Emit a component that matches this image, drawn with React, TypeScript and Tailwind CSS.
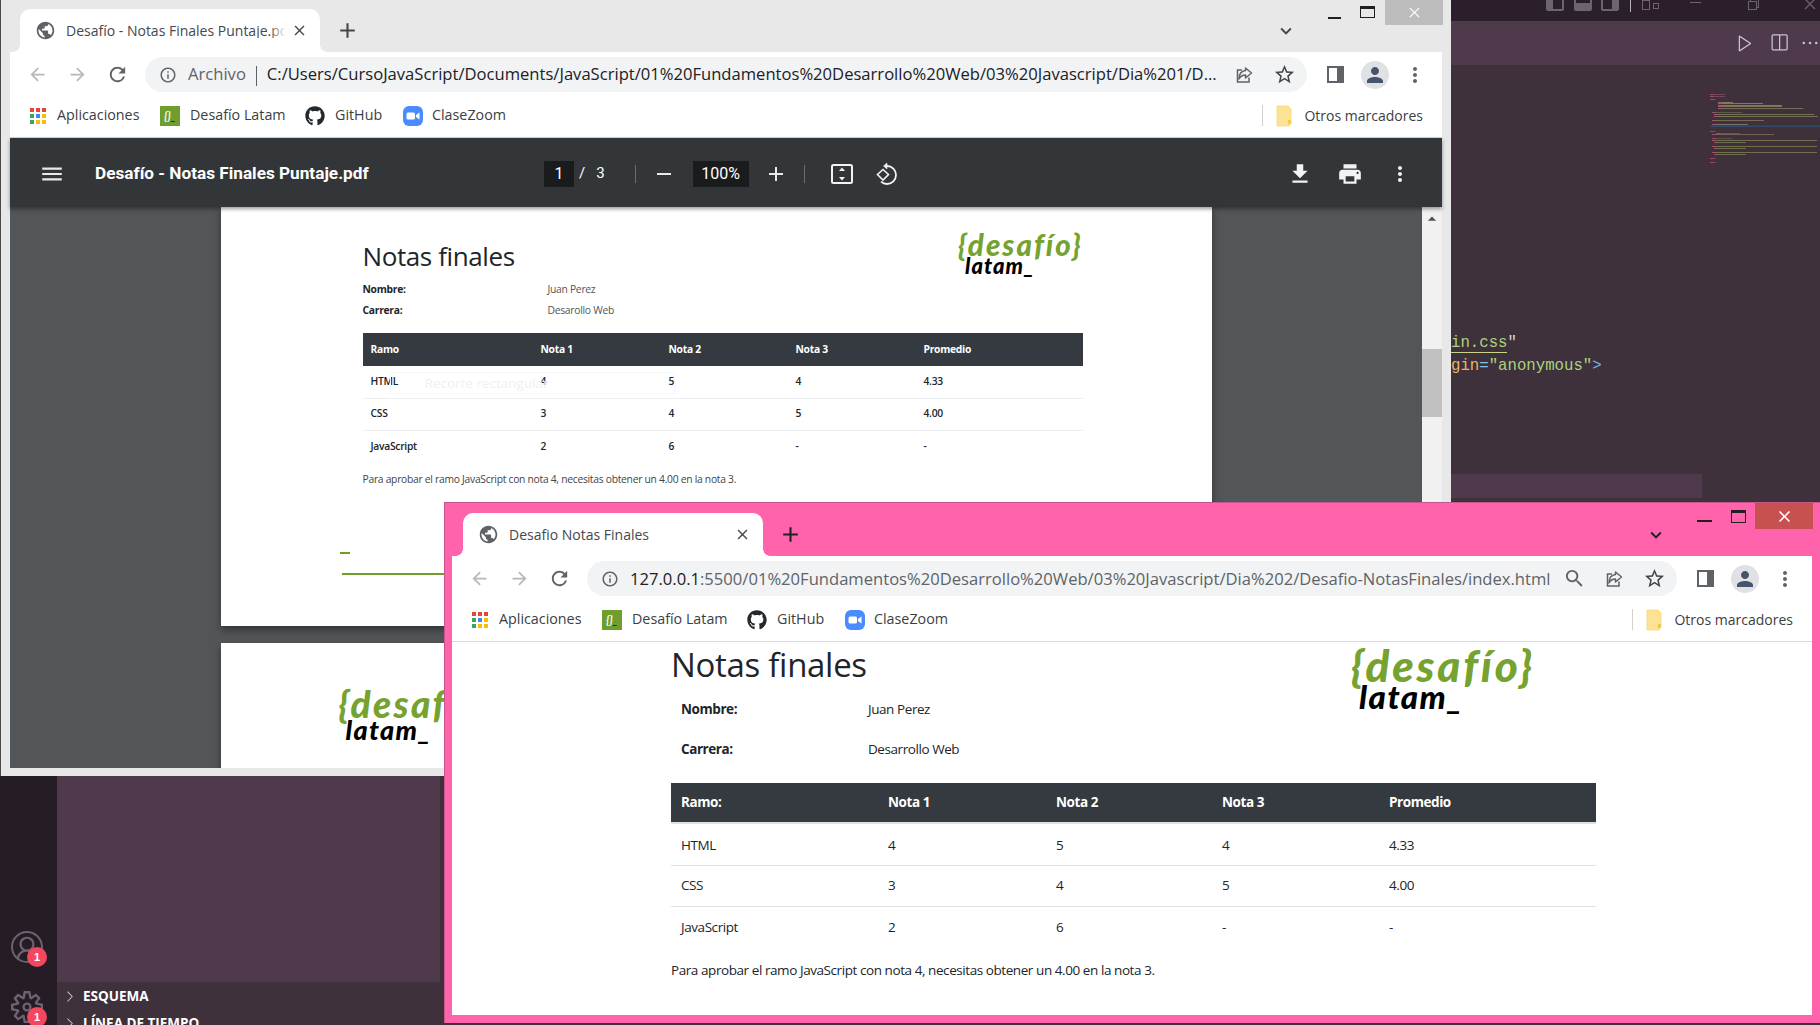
import React from "react";
import { MdPublic, MdArrowBack, MdArrowForward, MdRefresh, MdInfoOutline, MdStarBorder, MdMoreVert, MdPerson, MdClose, MdAdd, MdRemove, MdMenu, MdFileDownload, MdPrint, MdKeyboardArrowDown, MdSearch, MdArrowDropUp } from "react-icons/md";
import { FaGithub } from "react-icons/fa";
import { VscAccount, VscSettingsGear, VscChevronRight, VscPlay, VscSplitHorizontal, VscEllipsis, VscChromeClose, VscChromeRestore, VscChromeMinimize } from "react-icons/vsc";

const ui = "font-['Open_Sans','Noto_Sans',sans-serif]";

function ShareIcon() {
  return (
    <svg width="20" height="20" viewBox="0 0 20 20" fill="none" stroke="#5f6368" strokeWidth="1.5">
      <path d="M8 5H3.500v12h11.500v-4.500" />
      <path d="M11.500 3l6 5-6 5v-3c-3 0-5 1-6.500 4 0-5 2.500-8 6.500-8.500z" strokeLinejoin="round" />
    </svg>
  );
}

function AppsIcon() {
  const c = ["#ea4335", "#ea4335", "#ea4335", "#34a853", "#4285f4", "#fbbc04", "#34a853", "#fbbc04", "#fbbc04"];
  return (
    <div className="grid grid-cols-3 gap-[2px] w-[16px] h-[16px] mx-[2px]">
      {c.map((col, i) => (
        <span key={i} className="w-[4px] h-[4px]" style={{ backgroundColor: col }} />
      ))}
    </div>
  );
}

function DesafioFavicon() {
  return (
    <div className="w-[20px] h-[20px] bg-[#6f9e2c] flex items-center justify-center">
      <span className="font-['Lato',sans-serif] italic font-bold text-[11px] leading-none text-white">
        {"{}"}
        <span className="text-[#2d3b14]">_</span>
      </span>
    </div>
  );
}

function ZoomIcon() {
  return (
    <svg width="20" height="20" viewBox="0 0 20 20">
      <rect width="20" height="20" rx="6" fill="#4a8cff" />
      <rect x="3.500" y="6.500" width="8.500" height="7" rx="1.500" fill="#fff" />
      <path d="M13 9l3.500-2.500v7L13 11z" fill="#fff" />
    </svg>
  );
}

function FolderIcon() {
  return (
    <svg width="16" height="22" viewBox="0 0 16 22">
      <path d="M1 1h11l3 3v14l-2 3H1z" fill="#fde293" stroke="#f5d878" strokeWidth="0.8" />
      <rect x="12" y="15" width="3" height="4" fill="#f2c94c" />
    </svg>
  );
}

function Bookmarks() {
  const text = "text-[14.3px] leading-none text-[#3c4043] whitespace-nowrap";
  return (
    <div className={`h-[43px] bg-white border-b border-[#d9dadb] flex items-center pl-[18px] pr-[19px] pb-[1px] ${ui}`}>
      <AppsIcon />
      <span className={`${text} w-[83px] ml-[9px]`}>Aplicaciones</span>
      <div className="ml-[20px]"><DesafioFavicon /></div>
      <span className={`${text} w-[93px] ml-[10px]`}>Desafío Latam</span>
      <FaGithub className="ml-[22px] text-[#24292e]" size={20} />
      <span className={`${text} w-[47px] ml-[10px]`}>GitHub</span>
      <div className="ml-[21px]"><ZoomIcon /></div>
      <span className={`${text} w-[74px] ml-[9px]`}>ClaseZoom</span>
      <div className="flex-1" />
      <div className="w-px h-[21px] bg-[#d0d1d2]" />
      <div className="ml-[13px]"><FolderIcon /></div>
      <span className="text-[14px] leading-none text-[#3c4043] whitespace-nowrap ml-[12px]">Otros marcadores</span>
    </div>
  );
}

function Toolbar({ extraZoom, children }: { extraZoom?: boolean; children: React.ReactNode }) {
  const btn = "w-[40px] h-[35px] flex items-center justify-center shrink-0";
  return (
    <div className="h-[43px] bg-white flex items-start pt-[5px] pl-[7px] pr-[7px]">
      <div className={btn}><MdArrowBack size={21} color="#b6b8ba" /></div>
      <div className={btn}><MdArrowForward size={21} color="#b6b8ba" /></div>
      <div className={btn}><MdRefresh size={23} color="#5f6368" /></div>
      <div className={`flex-1 ml-[8px] mr-[8px] h-[35px] bg-[#f1f3f4] rounded-full flex items-center pl-[14px] pr-[3px] min-w-0 ${ui}`}>
        <MdInfoOutline size={18} color="#5f6368" className="shrink-0" />
        <div className="ml-[11px] pt-[2px] flex-1 min-w-0 overflow-hidden whitespace-nowrap text-[16.6px] leading-none">{children}</div>
        {extraZoom && <div className="w-[40px] flex justify-center"><MdSearch size={23} color="#5f6368" /></div>}
        <div className="w-[40px] flex justify-center"><ShareIcon /></div>
        <div className="w-[40px] flex justify-center"><MdStarBorder size={23} color="#44474a" /></div>
      </div>
      <div className={btn}>
        <div className="w-[17px] h-[17px] border-[2.5px] border-[#5f6368] border-r-[7px]" />
      </div>
      <div className={btn}>
        <div className="w-[28px] h-[28px] rounded-full bg-[#dfe1e5] flex items-center justify-center">
          <MdPerson size={24} color="#44546a" />
        </div>
      </div>
      <div className={btn}><MdMoreVert size={24} color="#5f6368" /></div>
    </div>
  );
}

function TabStrip({ title, fade, plusColor, chevColor, inset }: { title: string; fade?: boolean; plusColor: string; chevColor: string; inset: string }) {
  return (
    <div className={`h-[43px] flex items-center relative ${inset}`}>
      <div className={`w-[300px] h-[43px] bg-white rounded-t-[10px] flex items-center pl-[15px] pr-[12px] relative ${ui}`}>
        <span className="absolute -left-[7px] bottom-0 w-[7px] h-[7px] bg-[radial-gradient(circle_at_0_0,transparent_6.500px,white_7px)]" />
        <span className="absolute -right-[7px] bottom-0 w-[7px] h-[7px] bg-[radial-gradient(circle_at_100%_0,transparent_6.500px,white_7px)]" />
        <MdPublic size={21} color="#5f6368" className="shrink-0" />
        <div className="relative ml-[10px] w-[220px] overflow-hidden whitespace-nowrap text-[14px] leading-none text-[#45484c]">
          {title}
          {fade && <span className="absolute right-0 top-0 bottom-0 w-[16px] bg-gradient-to-r from-transparent to-white" />}
        </div>
        <div className="flex-1" />
        <MdClose size={17} color="#45484c" className="shrink-0" />
      </div>
      <MdAdd size={25} style={{ color: plusColor }} className="ml-[15px]" />
      <div className="flex-1" />
      <MdKeyboardArrowDown size={22} style={{ color: chevColor }} className="mr-[145px]" />
    </div>
  );
}

type LogoSize = "sm" | "md" | "lg";

function Logo({ size }: { size: LogoSize }) {
  const top = size === "lg" ? "text-[44px] tracking-[2.8px] h-[37px]" : size === "md" ? "text-[37px] tracking-[2.3px] h-[31px]" : "text-[29.5px] tracking-[2px] h-[25px]";
  const bottom = size === "lg" ? "text-[33px] ml-[8px] tracking-[1.5px]" : size === "md" ? "text-[27px] ml-[7px] tracking-[1.3px]" : "text-[22px] ml-[7px] tracking-[1px]";
  return (
    <div className="font-['Lato',sans-serif] italic leading-none">
      <div className={`font-black text-[#76a22f] whitespace-nowrap ${top}`}>{"{desafío}"}</div>
      <div className={`font-black text-black whitespace-nowrap ${bottom}`}>latam_</div>
    </div>
  );
}

function ReportTable({ variant }: { variant: "pdf" | "web" }) {
  const pdf = variant === "pdf";
  const rows = [
    ["HTML", "4", "5", "4", "4.33"],
    ["CSS", "3", "4", "5", "4.00"],
    ["JavaScript", "2", "6", "-", "-"],
  ];
  const widths = pdf ? ["w-[170px]", "w-[128px]", "w-[127px]", "w-[128px]", ""] : ["w-[207px]", "w-[168px]", "w-[166px]", "w-[167px]", ""];
  const head = [pdf ? "Ramo" : "Ramo:", "Nota 1", "Nota 2", "Nota 3", "Promedio"];
  const th = pdf
    ? "h-[33px] text-[10.3px] tracking-[-0.27px] font-bold text-white text-left px-[8px] py-0"
    : "h-[40px] text-[13.5px] tracking-[-0.43px] font-bold text-white text-left px-[10px] py-0";
  const td = pdf
    ? "h-[32px] text-[10.3px] tracking-[-0.27px] font-semibold text-[#212529] px-[8px] py-0 border-t border-[#eceeef]"
    : "h-[41px] text-[13.5px] tracking-[-0.43px] text-[#212529] px-[10px] py-0 border-t border-[#dee2e6]";
  return (
    <table className={`table-fixed w-full border-collapse ${ui}`}>
      <colgroup>
        {widths.map((w, i) => <col key={i} className={w} />)}
      </colgroup>
      <thead>
        <tr className={pdf ? "bg-[#343a40]" : "bg-[#343a40] border-b-2 border-[#dee2e6]"}>
          {head.map((h) => <th key={h} className={th}>{h}</th>)}
        </tr>
      </thead>
      <tbody>
        {rows.map((r, i) => (
          <tr key={r[0]}>
            {r.map((c, j) => (
              <td key={j} className={`${td} ${i === 0 ? "border-t-0" : ""} ${i === 0 && !pdf ? "pt-[2px] h-[42px]" : ""} ${pdf && j === 0 ? "font-bold" : ""}`}>{c}</td>
            ))}
          </tr>
        ))}
      </tbody>
    </table>
  );
}

function PdfWindow() {
  const iconBtn = "flex items-center justify-center shrink-0";
  return (
    <section className="absolute left-0 top-0 w-[1451px] h-[776px] bg-[#e8e8e8] border-l border-[#4a4a4a] flex flex-col overflow-hidden">
      <div className="h-[9px]" />
      <TabStrip title="Desafío - Notas Finales Puntaje.pdf" fade plusColor="#44474a" chevColor="#44474a" inset="pl-[19px] pr-[9px]" />
      <div className="flex-1 min-h-0 pl-[9px] pr-[9px] pb-[8px] flex flex-col">
        <Toolbar>
          <span className="text-[#5f6368]">Archivo</span>
          <span className="inline-block w-px h-[20px] bg-[#5f6368] mx-[10px] align-middle" />
          <span className="text-[#202124]">C:/Users/CursoJavaScript/Documents/JavaScript/01%20Fundamentos%20Desarrollo%20Web/03%20Javascript/Dia%201/D...</span>
        </Toolbar>
        <Bookmarks />
        <div className="h-[69px] pt-[2px] bg-[#323639] flex items-center text-white font-['Roboto',sans-serif] shadow-[0_2px_4px_rgba(0,0,0,0.4)] relative z-10">
          <MdMenu size={26} className="ml-[29px]" color="#e8eaed" />
          <span className="ml-[30px] text-[17.2px] font-bold w-[275px] whitespace-nowrap">Desafío - Notas Finales Puntaje.pdf</span>
          <div className="ml-[174px] w-[30px] h-[26px] bg-[#191b1c] flex items-center justify-center text-[16px]">1</div>
          <span className="ml-[5px] text-[15px]">/</span>
          <span className="ml-[11px] text-[15px]">3</span>
          <div className="ml-[30px] w-px h-[18px] bg-[#6b6e70]" />
          <div className={`${iconBtn} ml-[16px] w-[24px]`}><MdRemove size={24} color="#e8eaed" /></div>
          <div className="ml-[17px] w-[56px] h-[26px] bg-[#191b1c] flex items-center justify-center text-[16px]">100%</div>
          <div className={`${iconBtn} ml-[15px] w-[24px]`}><MdAdd size={24} color="#e8eaed" /></div>
          <div className="ml-[16px] w-px h-[18px] bg-[#6b6e70]" />
          <svg className="ml-[26px]" width="22" height="20" viewBox="0 0 22 20" fill="none" stroke="#f1f3f4" strokeWidth="2">
            <rect x="1" y="1" width="20" height="18" rx="1.500" />
            <path d="M11 3.500l-3 3.500h6zM11 16.500l-3-3.500h6z" fill="#f1f3f4" strokeWidth="0" />
          </svg>
          <svg className="ml-[22px]" width="24" height="24" viewBox="0 0 24 24" fill="none" stroke="#f1f3f4" strokeWidth="1.800">
            <path d="M12 4a9 9 0 0 1 0 18 9 9 0 0 1-6-2.300" />
            <path d="M12 1v6l-3.500-3z" fill="#f1f3f4" strokeWidth="0.600" />
            <path d="M8 7.500l5.500 5-5.500 5.500-5.500-5.500z" strokeWidth="1.600" />
          </svg>
          <div className="flex-1" />
          <MdFileDownload size={26} color="#f1f3f4" />
          <MdPrint size={26} color="#f1f3f4" className="ml-[24px]" />
          <MdMoreVert size={24} color="#f1f3f4" className="ml-[25px] mr-[30px]" />
        </div>
        <div className="flex-1 min-h-0 flex">
          <div className="flex-1 bg-[#525659] overflow-hidden flex flex-col items-center">
            <article className="w-[991px] h-[419px] shrink-0 bg-white shadow-[0_4px_8px_rgba(0,0,0,0.4)] pt-[26px] pl-[142px] pr-[129px]">
              <div className="flex justify-between items-start h-[42px]">
                <h1 className={`text-[26px] leading-[46px] text-[#212529] tracking-[-0.4px] ${ui}`}>Notas finales</h1>
                <div className="-mt-[3px]"><Logo size="sm" /></div>
              </div>
              <dl className={`mt-[4px] ${ui} text-[10.3px] tracking-[-0.27px] text-[#212529]`}>
                <div className="flex h-[21px] items-center"><dt className="w-[185px] font-bold">Nombre:</dt><dd className="text-[#555]">Juan Perez</dd></div>
                <div className="flex h-[21px] items-center"><dt className="w-[185px] font-bold">Carrera:</dt><dd className="text-[#555]">Desarollo Web</dd></div>
              </dl>
              <div className="mt-[12px] relative">
                <ReportTable variant="pdf" />
                <div className={`absolute left-[27px] top-[39px] w-[285px] h-[22px] border border-[#f6f8fa] flex items-center pl-[34px] text-[13.5px] text-[#eef1f3] whitespace-nowrap ${ui}`}>Recorte rectangular</div>
              </div>
              <p className={`mt-[10px] text-[10.3px] tracking-[-0.27px] text-[#444] ${ui}`}>Para aprobar el ramo JavaScript con nota 4, necesitas obtener un 4.00 en la nota 3.</p>
              <div className="-ml-[23px] mt-[65px] w-[10px] h-[2px] bg-[#6f9e2c]" />
              <div className="-ml-[21px] mt-[19px] h-[2px] w-[120px] bg-[#6f9e2c]" />
            </article>
            <article className="w-[991px] h-[200px] shrink-0 mt-[17px] bg-white shadow-[0_4px_8px_rgba(0,0,0,0.4)] pl-[118px] pt-[42px]">
              <Logo size="md" />
            </article>
          </div>
          <div className="w-[20px] bg-[#f1f1f1] flex flex-col items-center">
            <MdArrowDropUp size={20} color="#505050" className="mt-[2px]" />
            <div className="mt-[120px] w-full h-[68px] bg-[#c1c1c1]" />
          </div>
        </div>
      </div>
      <div className="absolute right-[8px] top-0 w-[58px] h-[25px] bg-[#bdbdbd] flex items-center justify-center text-white"><VscChromeClose size={15} /></div>
      <div className="absolute left-[1327px] top-[17px] w-[13px] h-[2px] bg-[#202020]" />
      <div className="absolute left-[1359px] top-[6px] w-[15px] h-[12px] border border-[#202020] border-t-[3px]" />
    </section>
  );
}

function WebWindow() {
  return (
    <section className="absolute left-[444px] top-[502px] w-[1376px] h-[521px] bg-[#fe63ab] border-l border-t border-[#c9558d] flex flex-col overflow-hidden">
      <div className="h-[10px]" />
      <TabStrip title="Desafio Notas Finales" plusColor="#202124" chevColor="#202124" inset="pl-[18px] pr-[8px]" />
      <div className="flex-1 min-h-0 pl-[7px] pr-[8px] pb-[8px] flex flex-col">
        <Toolbar extraZoom>
          <span className="text-[#202124]">127.0.0.1</span>
          <span className="text-[#5f6368]">:5500/01%20Fundamentos%20Desarrollo%20Web/03%20Javascript/Dia%202/Desafio-NotasFinales/index.html</span>
        </Toolbar>
        <Bookmarks />
        <div className="flex-1 min-h-0 bg-white pl-[219px] pr-[216px] overflow-hidden">
          <div className="flex h-[39px]">
            <h1 className={`text-[33px] leading-[45px] text-[#212529] tracking-[-0.3px] ${ui}`}>Notas finales</h1>
            <div className="flex-1" />
            <div className="mr-[61px] mt-[1px]"><Logo size="lg" /></div>
          </div>
          <dl className={`mt-[8px] text-[13.5px] tracking-[-0.43px] text-[#212529] ${ui}`}>
            <div className="flex h-[40px] items-center pl-[10px]"><dt className="w-[187px] font-bold">Nombre:</dt><dd>Juan Perez</dd></div>
            <div className="flex h-[40px] items-center pl-[10px]"><dt className="w-[187px] font-bold">Carrera:</dt><dd>Desarrollo Web</dd></div>
          </dl>
          <div className="mt-[14px]"><ReportTable variant="web" /></div>
          <p className={`mt-[13px] text-[13.5px] tracking-[-0.43px] text-[#212529] ${ui}`}>Para aprobar el ramo JavaScript con nota 4, necesitas obtener un 4.00 en la nota 3.</p>
        </div>
      </div>
      <div className="absolute right-[7px] top-0 w-[58px] h-[26px] bg-[#c75050] flex items-center justify-center text-white"><MdClose size={19} /></div>
      <div className="absolute left-[1252px] top-[17px] w-[15px] h-[2px] bg-[#202020]" />
      <div className="absolute left-[1286px] top-[7px] w-[15px] h-[13px] border border-[#202020] border-t-[3px]" />
    </section>
  );
}

function Minimap() {
  const rows: [number, number, string, number][] = [
    [94, 0, "#9a5a78", 15], [96, 0, "#9a5a78", 15], [99, 0, "#b04a70", 6],
    [102, 8, "#c7b060", 15], [103, 8, "#c7b060", 45], [105, 8, "#b0c070", 64], [106, 8, "#b0a070", 64], [108, 8, "#9aa070", 85],
    [112, 2, "#7a7a60", 30], [114, 4, "#a0a870", 100], [116, 4, "#a0a870", 104],
    [120, 2, "#a09a70", 52], [124, 2, "#c0a0a0", 36],
    [131, 0, "#b04a70", 6], [133, 6, "#7a7a70", 24], [134, 2, "#a08a70", 62],
    [138, 2, "#6a6a60", 20], [140, 2, "#a0a060", 105], [142, 4, "#90a060", 32],
    [146, 2, "#a0a060", 105], [148, 4, "#90a060", 32], [152, 2, "#a0a060", 105], [154, 4, "#90a060", 32],
    [158, 0, "#b04a70", 6], [162, 0, "#b04a70", 6],
  ];
  return (
    <svg width="110" height="80" viewBox="0 90 110 80" className="block">
      <rect x="0" y="125.500" width="110" height="1.500" fill="#2f4d66" />
      {rows.map((r, i) => (
        <g key={i}>
          <rect x={r[1]} y={r[0]} width={r[3]} height="1" fill={r[2]} opacity="0.55" />
          <rect x={r[1]} y={r[0]} width="4" height="1" fill="#b04a70" opacity="0.7" />
        </g>
      ))}
    </svg>
  );
}

function TopIcon({ kind }: { kind: number }) {
  return (
    <div className="w-[18px] h-[18px] border-2 border-[#6e6470] rounded-[2px] bg-[#6e6470] relative -mt-[7px] overflow-hidden">
      <div className={kind === 0 ? "absolute right-0 top-0 bottom-0 w-[9px] bg-[#2a1f2a]" : kind === 1 ? "absolute left-0 right-0 top-0 h-[8px] bg-[#2a1f2a]" : "absolute left-0 top-0 bottom-0 w-[9px] bg-[#2a1f2a]"} />
    </div>
  );
}

function VsCode() {
  return (
    <div className="absolute inset-0 bg-[#3e313b] flex flex-col font-['Liberation_Sans',sans-serif]">
      <div className="h-[21px] bg-[#2a1f2a] flex items-start justify-end overflow-hidden text-[#6e6470] shrink-0">
        <TopIcon kind={0} />
        <div className="ml-[10px]"><TopIcon kind={1} /></div>
        <div className="ml-[9px]"><TopIcon kind={2} /></div>
        <div className="ml-[11px] w-px h-[12px] bg-[#b8b0b8]" />
        <div className="ml-[11px] w-[8px] h-[10px] border border-[#6e6470]" />
        <div className="ml-[3px] mt-[3px] w-[6px] h-[6px] border border-[#6e6470]" />
        <VscChromeMinimize size={16} className="ml-[28px] -mt-[6px]" />
        <VscChromeRestore size={16} className="ml-[42px] -mt-[4px]" />
        <VscChromeClose size={16} className="ml-[41px] mr-[2px] -mt-[4px]" />
      </div>
      <div className="flex-1 min-h-0 flex">
        <div className="w-[57px] bg-[#251c25] flex flex-col items-center justify-end pb-[2px] shrink-0">
          <div className="relative mb-[28px] -ml-[3px]">
            <VscAccount size={32} color="#6b6470" />
            <span className="absolute left-[16px] top-[16px] w-[20px] h-[20px] rounded-full bg-[#f4475e] text-white text-[11px] font-bold flex items-center justify-center">1</span>
          </div>
          <div className="relative -ml-[3px]">
            <VscSettingsGear size={32} color="#6b6470" />
            <span className="absolute left-[16px] top-[16px] w-[20px] h-[20px] rounded-full bg-[#f4475e] text-white text-[11px] font-bold flex items-center justify-center">1</span>
          </div>
        </div>
        <div className="w-[383px] flex flex-col shrink-0">
          <div className="flex-1 bg-[#4f3a4c]" />
          <div className="h-[43px] bg-[#3e313b] text-white text-[13.5px] font-bold font-['Open_Sans',sans-serif]">
            <div className="h-[28px] flex items-center pl-[4px]"><VscChevronRight size={17} color="#c8c8c8" /><span className="ml-[5px]">ESQUEMA</span></div>
            <div className="h-[22px] mt-[2px] flex items-center pl-[4px]"><VscChevronRight size={17} color="#c8c8c8" /><span className="ml-[5px]">LÍNEA DE TIEMPO</span></div>
          </div>
        </div>
        <div className="flex-1 min-w-0 flex flex-col">
          <div className="h-[44px] bg-[#4f3a4c] flex items-center justify-end text-[#c9c5d0] shrink-0">
            <VscPlay size={20} />
            <VscSplitHorizontal size={20} className="ml-[14px]" />
            <VscEllipsis size={20} className="ml-[11px]" />
          </div>
          <div className="flex justify-end pt-[25px] h-[110px] shrink-0"><Minimap /></div>
          <div className="pl-[1011px] mt-[157px] font-['Liberation_Mono',monospace] text-[15.7px] leading-[23px] whitespace-nowrap">
            <div><span className="text-[#a9d57f] border-b border-[#c8d48a]">in.css</span><span className="text-[#d8d8d8]">"</span></div>
            <div><span className="text-[#f0b45a]">gin</span><span className="text-[#7fc8e8]">=</span><span className="text-[#a9d57f]">"anonymous"</span><span className="text-[#6db8f0]">&gt;</span></div>
          </div>
          <div className="ml-[1011px] mt-[96px] w-[251px] h-[24px] bg-[#4f3a4c]" />
        </div>
      </div>
    </div>
  );
}

export default function App() {
  return (
    <main className="relative w-[1820px] h-[1025px] overflow-hidden">
      <VsCode />
      <PdfWindow />
      <WebWindow />
    </main>
  );
}
